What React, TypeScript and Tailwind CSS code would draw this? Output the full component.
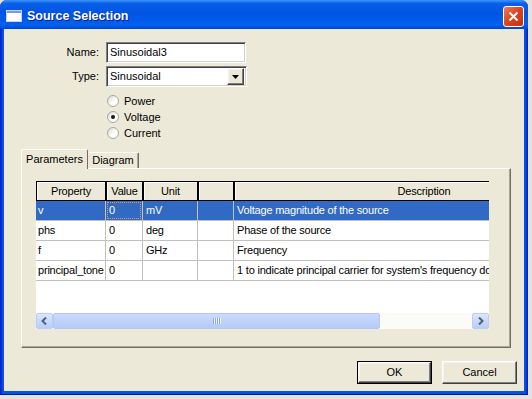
import 'react';

const raised =
  'border border-t-white border-l-white border-r-[#404040] border-b-[#404040] shadow-[inset_-1px_-1px_0_#808080,inset_1px_1px_0_#f4f3ee]';
const sunken =
  'border border-t-[#808080] border-l-[#808080] border-r-white border-b-white shadow-[inset_1px_1px_0_#404040,inset_-1px_-1px_0_#d4d0c8]';

const Radio = ({ label, checked }: { label: string; checked?: boolean }) => (
  <div className="flex items-center h-[16px]">
    <span className="w-[12px] h-[12px] rounded-full border border-[#a8a8a0] bg-[linear-gradient(135deg,#dcdad0,#ffffff_60%)] flex items-center justify-center">
      {checked && <span className="w-[4px] h-[4px] rounded-full bg-[#1a1a1a]" />}
    </span>
    <span className="ml-[5px]">{label}</span>
  </div>
);

const cols = [
  { name: 'Property', w: 'w-[70px]' },
  { name: 'Value', w: 'w-[37px]' },
  { name: 'Unit', w: 'w-[55px]' },
  { name: '', w: 'w-[36px]' },
  { name: 'Description', w: 'w-[380px]' },
];

const rows = [
  ['v', '0', 'mV', '', 'Voltage magnitude of the source'],
  ['phs', '0', 'deg', '', 'Phase of the source'],
  ['f', '0', 'GHz', '', 'Frequency'],
  ['principal_tone', '0', '', '', "1 to indicate principal carrier for system's frequency domain analysis"],
];

const ScrollArrow = ({ dir }: { dir: 'left' | 'right' }) => (
  <div className="w-[17px] h-[16px] rounded-[2px] border border-[#b9cdf5] bg-[linear-gradient(to_bottom,#dbe6fd,#b8cdf8)] flex items-center justify-center">
    <svg width="7" height="8" viewBox="0 0 7 8">
      <path
        d={dir === 'left' ? 'M5 0.5 L1.5 4 L5 7.5' : 'M2 0.5 L5.5 4 L2 7.5'}
        stroke="#4d6185"
        strokeWidth="2"
        fill="none"
      />
    </svg>
  </div>
);

export default function App() {
  return (
    <div className="w-[532px] h-[399px] bg-[#e4e2da] overflow-hidden font-['Liberation_Sans',Arial,sans-serif] text-[11px] text-black">
      <div className="w-[528px] h-[395px] flex flex-col rounded-t-[7px] bg-[linear-gradient(to_right,#0019cf,#0855dd_3px,#0855dd_calc(100%-3px),#0019cf)] shadow-[inset_0_-1px_0_#001ea0]">
        {/* Title bar */}
        <div className="h-[29px] shrink-0 flex items-center rounded-t-[7px] bg-[linear-gradient(to_bottom,#3d95ff,#0a5fe8_12%,#0054e3_45%,#0060f0_85%,#0048d0_100%)] pl-[6px] pr-[4px] pt-[3px]">
          <svg width="16" height="12" viewBox="0 0 16 12">
            <rect x="0.5" y="0.5" width="15" height="11" fill="#ffffff" stroke="#c9d4ea" />
            <rect x="1" y="1" width="14" height="2" fill="#6f9de8" />
          </svg>
          <span className="ml-[5px] text-white font-bold text-[12.5px] [text-shadow:1px_1px_0_#0a1e8c]">
            Source Selection
          </span>
          <div className="ml-auto w-[21px] h-[21px] rounded-[3px] border border-white bg-[linear-gradient(135deg,#ec7a5c,#d8441f_50%,#c23412)] flex items-center justify-center">
            <svg width="11" height="11" viewBox="0 0 11 11">
              <path d="M1.5 1.5 L9.5 9.5 M9.5 1.5 L1.5 9.5" stroke="#ffffff" strokeWidth="2" />
            </svg>
          </div>
        </div>

        {/* Client */}
        <div className="flex-1 mx-[4px] mb-[4px] bg-[#ece9d8] flex flex-col">
          <div className="pt-[13px] flex flex-col">
            <div className="flex items-center h-[21px]">
              <span className="w-[95px] text-right">Name:</span>
              <div className={`ml-[7px] w-[140px] h-[21px] bg-white flex items-center pl-[3px] ${sunken}`}>
                Sinusoidal3
              </div>
            </div>
            <div className="flex items-center h-[21px] mt-[3px]">
              <span className="w-[95px] text-right">Type:</span>
              <div className={`ml-[7px] w-[141px] h-[21px] bg-white flex items-center pl-[3px] pr-[2px] ${sunken}`}>
                <span className="flex-1">Sinusoidal</span>
                <div className={`w-[17px] h-[17px] bg-[#ece9d8] flex items-center justify-center ${raised}`}>
                  <svg width="7" height="4" viewBox="0 0 7 4">
                    <path d="M0 0 H7 L3.5 4 Z" fill="#000" />
                  </svg>
                </div>
              </div>
            </div>
            <div className="flex flex-col mt-[6px] ml-[103px]">
              <Radio label="Power" />
              <Radio label="Voltage" checked />
              <Radio label="Current" />
            </div>
          </div>

          {/* Tabs */}
          <div className="flex items-end h-[20px] mt-[7px] pl-[17px] relative z-10">
            <div className="w-[67px] h-[20px] -mb-[1px] bg-[#ece9d8] border-t border-l border-white border-r border-r-[#716f64] rounded-t-[2px] flex items-center justify-center pb-[1px]">
              Parameters
            </div>
            <div className="w-[51px] h-[16px] bg-[#ece9d8] border-t border-white border-r border-r-[#716f64] shadow-[inset_-1px_0_0_#aca899] rounded-t-[2px] flex items-center justify-center">
              Diagram
            </div>
          </div>

          {/* Panel */}
          <div className="ml-[17px] w-[490px] h-[180px] border border-t-white border-l-white border-r-[#716f64] border-b-[#716f64] shadow-[inset_-1px_-1px_0_#aca899] pt-[12px] pl-[14px]">
            <div className="w-[453px] h-[148px] bg-white flex flex-col overflow-hidden tracking-[-0.2px]">
              <div className="flex-1 overflow-hidden">
                <div className="w-[600px]">
                  <div className="flex h-[20px] border-t border-b border-l border-black bg-[#ece9d8]">
                    {cols.map((c, i) => (
                      <div
                        key={i}
                        className={`${c.w} shrink-0 h-full border-r-2 border-black shadow-[inset_1px_1px_0_#ffffff] flex items-center justify-center`}
                      >
                        {c.name}
                      </div>
                    ))}
                  </div>
                  {rows.map((r, ri) => {
                    const sel = ri === 0;
                    return (
                      <div
                        key={ri}
                        className={`flex h-[20px] border-b border-[#c0c0c0] ${sel ? 'bg-[#316ac5] text-white' : ''}`}
                      >
                        {r.map((cell, ci) => (
                          <div
                            key={ci}
                            className={`${cols[ci].w} shrink-0 h-full border-r border-[#c0c0c0] flex items-center whitespace-nowrap overflow-hidden ${ci === 0 ? 'pl-[2px]' : 'pl-[3px]'}`}
                          >
                            {sel && ci === 1 ? (
                              <span className="h-[17px] w-[34px] -ml-[2px] pl-[1px] flex items-center border border-dotted border-[#e0a040] bg-[#316ac5]">
                                {cell}
                              </span>
                            ) : (
                              cell
                            )}
                          </div>
                        ))}
                      </div>
                    );
                  })}
                </div>
              </div>
              {/* Horizontal scrollbar */}
              <div className="h-[16px] flex bg-[#fbfbf8]">
                <ScrollArrow dir="left" />
                <div className="w-[327px] h-[16px] rounded-[2px] border border-[#b3c8f5] bg-[linear-gradient(to_bottom,#cbdafc,#b6cbf8)] flex items-center justify-center gap-[1px]">
                  {[0, 1, 2, 3].map((i) => (
                    <span key={i} className="w-[1px] h-[6px] bg-[#8fa9e6] shadow-[1px_0_0_#ecf1fe]" />
                  ))}
                </div>
                <div className="flex-1" />
                <ScrollArrow dir="right" />
              </div>
            </div>
          </div>

          {/* Buttons */}
          <div className="flex justify-end gap-[10px] mt-[13px] pr-[7px]">
            <div className="w-[75px] h-[23px] border border-black">
              <div className={`w-full h-full flex items-center justify-center ${raised}`}>OK</div>
            </div>
            <div className={`w-[75px] h-[23px] flex items-center justify-center ${raised}`}>Cancel</div>
          </div>
        </div>
      </div>
    </div>
  );
}
